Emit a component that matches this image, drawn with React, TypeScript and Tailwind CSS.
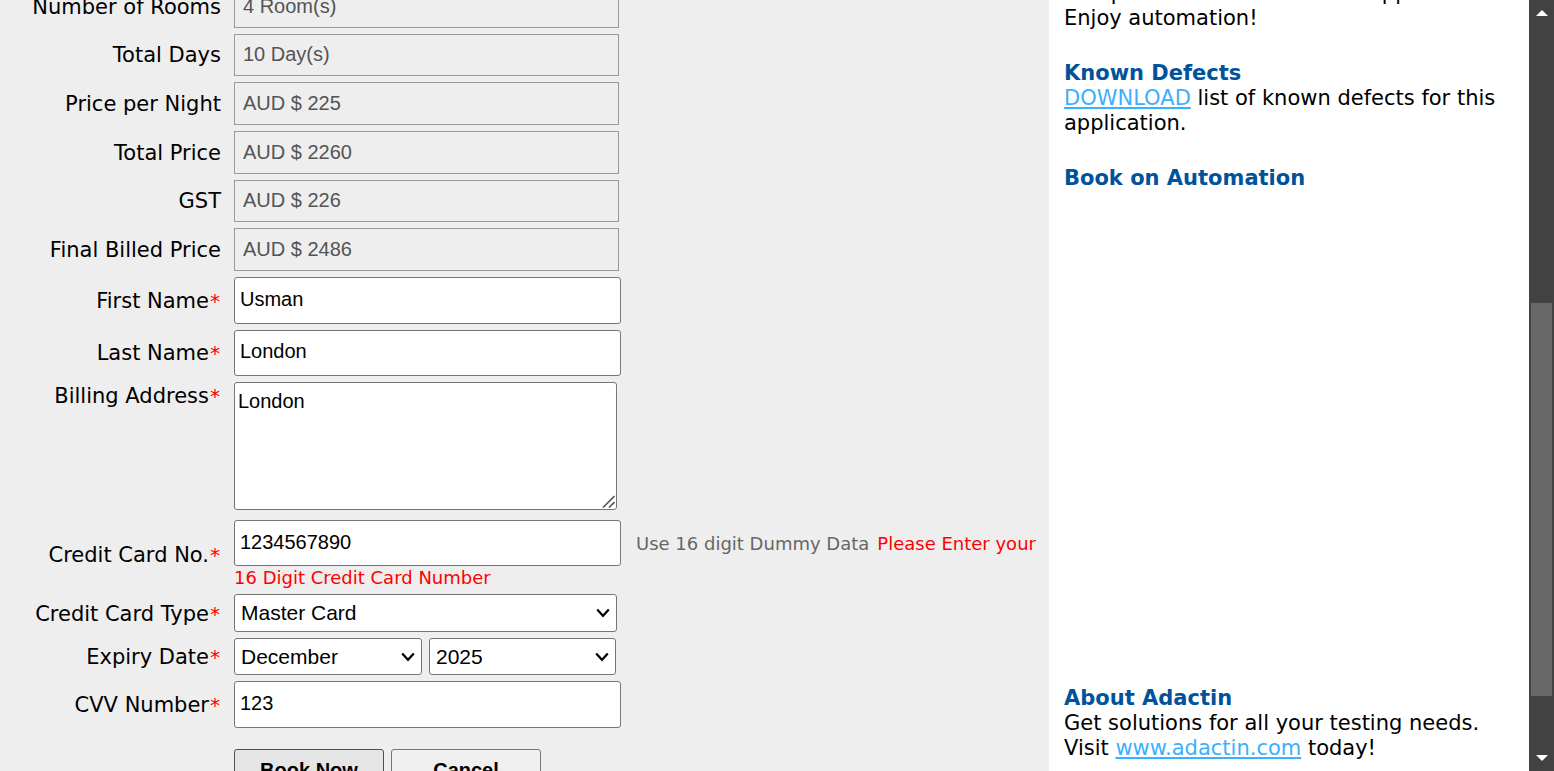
import type { ReactNode } from "react";

const bookingSummary = [
  { id: "rooms", label: "Number of Rooms", value: "4 Room(s)" },
  { id: "days", label: "Total Days", value: "10 Day(s)" },
  { id: "price-night", label: "Price per Night", value: "AUD $ 225" },
  { id: "total-price", label: "Total Price", value: "AUD $ 2260" },
  { id: "gst", label: "GST", value: "AUD $ 226" },
  { id: "final-price", label: "Final Billed Price", value: "AUD $ 2486" },
];

const controlFont = "font-['Liberation_Sans',Arial,sans-serif] text-[20px]";
const textBox =
  controlFont +
  " block w-[387px] rounded-[3px] border border-[#767676] bg-white px-[5px] pb-[2px] text-black";
const selectBox =
  "font-['Liberation_Sans',Arial,sans-serif] text-[21px] block w-full appearance-none rounded-[3px] border border-[#767676] bg-white pb-[1px] pl-[6px] pr-8 text-black";

function Label({ htmlFor, required, children }: { htmlFor: string; required?: boolean; children: ReactNode }) {
  return (
    <label htmlFor={htmlFor} className="w-[221px] shrink-0 pt-[2px] text-right whitespace-nowrap">
      {children}
      {required && <span className="px-[1px] text-[20px] text-[#ff0000]">*</span>}
    </label>
  );
}

function Select({ id, label, options, className }: { id: string; label?: string; options: string[]; className: string }) {
  return (
    <div className={"relative flex " + className}>
      <select id={id} aria-label={label} className={selectBox} defaultValue={options[0]}>
        {options.map((option) => (
          <option key={option}>{option}</option>
        ))}
      </select>
      <svg
        className="pointer-events-none absolute right-[7px] top-1/2 -translate-y-1/2"
        width="14"
        height="10"
        viewBox="0 0 14 10"
        fill="none"
        stroke="#000"
        strokeWidth="2.2"
        aria-hidden="true"
      >
        <path d="M1.2 1.6 7 7.8 12.8 1.6" />
      </svg>
    </div>
  );
}

function BookingForm() {
  return (
    <form className="-mt-[15px] min-w-0 flex-1 bg-[#eeeeee]" onSubmit={(event) => event.preventDefault()}>
      <div className="grid h-[286px] grid-rows-6 gap-[6px]">
        {bookingSummary.map((item) => (
          <div key={item.id} className="flex items-center gap-[13px]">
            <Label htmlFor={item.id}>{item.label}</Label>
            <input
              id={item.id}
              disabled
              defaultValue={item.value}
              className="block h-full w-[385px] border border-[#999999] bg-transparent px-[8px] font-['Liberation_Sans',Arial,sans-serif] text-[20px] text-[#545454]"
            />
          </div>
        ))}
      </div>

      <div className="mt-[6px] grid h-[99px] grid-rows-2 gap-[6px]">
        <div className="flex items-center gap-[13px]">
          <Label htmlFor="first-name" required>First Name</Label>
          <input id="first-name" defaultValue="Usman" className={textBox + " h-full"} />
        </div>
        <div className="flex items-center gap-[13px]">
          <Label htmlFor="last-name" required>Last Name</Label>
          <input id="last-name" defaultValue="London" className={textBox + " h-full"} />
        </div>
      </div>

      <div className="mt-[6px] flex items-start gap-[13px]">
        <Label htmlFor="address" required>Billing Address</Label>
        <div className="relative">
          <textarea
            id="address"
            defaultValue="London"
            className={controlFont + " block h-[128px] w-[383px] resize-none rounded-[3px] border border-[#767676] bg-white px-[3px] py-[6px] leading-[24px] text-black"}
          />
          <svg
            className="pointer-events-none absolute right-[2px] bottom-[2px]"
            width="13"
            height="13"
            viewBox="0 0 13 13"
            fill="none"
            stroke="#555"
            strokeWidth="1.6"
            aria-hidden="true"
          >
            <path d="M1 12.5 12.5 1M7 12.5 12.5 7" />
          </svg>
        </div>
      </div>

      <div className="mt-[10px] flex items-center gap-[13px]">
        <Label htmlFor="card-number" required>Credit Card No.</Label>
        <div className="text-[18px]">
          <div className="flex items-center">
            <input id="card-number" defaultValue="1234567890" className={textBox + " h-[46px]"} />
            <span className="ml-[15px] whitespace-nowrap text-[#666666]">Use 16 digit Dummy Data</span>
            <span className="ml-[8px] whitespace-nowrap text-[#ff0000]">Please Enter your</span>
          </div>
          <p className="h-[22px] leading-[24px] text-[#ff0000]">16 Digit Credit Card Number</p>
        </div>
      </div>

      <div className="mt-[6px] flex items-center gap-[13px]">
        <Label htmlFor="card-type" required>Credit Card Type</Label>
        <Select id="card-type" options={["Master Card", "American Express", "VISA", "Other"]} className="h-[38px] w-[383px]" />
      </div>

      <div className="mt-[6px] flex items-center gap-[13px]">
        <Label htmlFor="expiry-month" required>Expiry Date</Label>
        <div className="flex gap-[7px]">
          <Select id="expiry-month" options={["December", "November", "October"]} className="h-[37px] w-[188px]" />
          <Select id="expiry-year" label="Expiry year" options={["2025", "2026", "2027"]} className="h-[37px] w-[187px]" />
        </div>
      </div>

      <div className="mt-[6px] flex items-center gap-[13px]">
        <Label htmlFor="cvv" required>CVV Number</Label>
        <input id="cvv" defaultValue="123" className={textBox + " h-[47px]"} />
      </div>

      <div className="mt-[21px] flex gap-[7px] pl-[234px] font-['Liberation_Sans',Arial,sans-serif] text-[20px] font-bold">
        <button type="submit" className="h-[42px] w-[150px] rounded-[3px] border border-[#4f4f4f] bg-[#e5e5e5]">Book Now</button>
        <button type="button" className="h-[42px] w-[150px] rounded-[3px] border border-[#767676] bg-[#efefef]">Cancel</button>
      </div>
    </form>
  );
}

function Sidebar() {
  const heading = "font-bold text-[#00529b]";
  const link = "text-[#3bb0ff] underline decoration-2 underline-offset-2";
  return (
    <aside className="-mt-[19px] w-[480px] shrink-0 bg-white px-[15px]">
      <p>
        Sample test cases for above application.
        <br />
        Enjoy automation!
      </p>
      <h2 className={heading + " mt-[30px]"}>Known Defects</h2>
      <p>
        <a href="#defects" className={link}>DOWNLOAD</a> list of known defects for this application.
      </p>
      <h2 className={heading + " mt-[30px]"}>Book on Automation</h2>
      <div className="h-[495px]" />
      <h2 className={heading}>About Adactin</h2>
      <p>
        Get solutions for all your testing needs.
        <br />
        Visit <a href="#adactin" className={link}>www.adactin.com</a> today!
      </p>
    </aside>
  );
}

function ScrollTrack() {
  return (
    <div className="flex w-[25px] shrink-0 flex-col items-center bg-[#424242]" aria-hidden="true">
      <svg className="mt-[10px]" width="12" height="6" viewBox="0 0 12 6" fill="#fff">
        <path d="M0 6 6 0l6 6z" />
      </svg>
      <div className="grow-[287]" />
      <div className="w-[21px] grow-[393] bg-[#686868]" />
      <div className="grow-[59]" />
      <svg className="mb-[10px]" width="12" height="6" viewBox="0 0 12 6" fill="#fff">
        <path d="M0 0h12L6 6z" />
      </svg>
    </div>
  );
}

export default function App() {
  return (
    <div className="flex h-screen overflow-hidden bg-white font-['DejaVu_Sans',Verdana,sans-serif] text-[21px] leading-[25px] text-black">
      <BookingForm />
      <Sidebar />
      <ScrollTrack />
    </div>
  );
}
